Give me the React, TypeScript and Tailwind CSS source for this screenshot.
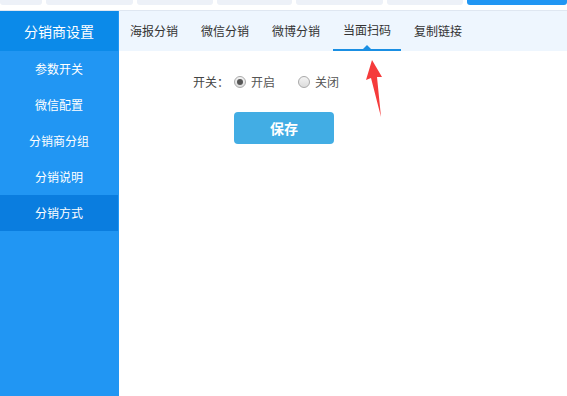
const font = { fontFamily: '"Noto Sans CJK SC", "Noto Sans", sans-serif' };

const topPieces = [
  "w-[42px]",
  "w-[87px]",
  "w-[76px]",
  "w-[75px]",
  "w-[87px]",
  "w-[76px]",
];

const menu = ["参数开关", "微信配置", "分销商分组", "分销说明", "分销方式"];
const tabs = ["海报分销", "微信分销", "微博分销", "当面扫码", "复制链接"];

function Radio({ checked, label }: { checked?: boolean; label: string }) {
  return (
    <label className="flex items-center gap-[5px]">
      <span className="w-[12px] h-[12px] rounded-full border border-[#a9a9a9] bg-gradient-to-b from-[#f4f4f4] to-[#dcdcdc] flex items-center justify-center">
        {checked && <span className="w-[6px] h-[6px] rounded-full bg-[#555]" />}
      </span>
      <span className="text-[#555]">{label}</span>
    </label>
  );
}

export default function App() {
  return (
    <div className="h-screen bg-white text-[12px] text-[#333] relative overflow-hidden" style={font}>
      <div className="h-[11px] border-b border-[#dfe7f1] flex gap-[4px]">
        {topPieces.map((w, i) => (
          <div key={i} className={`${w} h-[5px] rounded-b-[3px] bg-[#edf1f8]`} />
        ))}
        <div className="w-[100px] h-[5px] rounded-b-[3px] bg-[#2196f3]" />
      </div>

      <div className="flex h-[385px]">
        <div className="w-[119px] bg-[#2196f3] text-white">
          <div className="w-[118px] h-[40px] bg-[#0b8ae9] flex items-center justify-center text-[14px]">
            分销商设置
          </div>
          {menu.map((m, i) => (
            <div
              key={m}
              className={`w-[118px] h-[36px] flex items-center justify-center ${i === 4 ? "bg-[#0a7ddf]" : ""}`}
            >
              {m}
            </div>
          ))}
        </div>

        <div className="flex-1">
          <div className="h-[40px] bg-[#eef6fe] flex pl-px gap-[3px]">
            {tabs.map((t, i) => (
              <div
                key={t}
                className={`relative w-[68px] flex items-center justify-center ${i === 3 ? "border-b-2 border-[#1a8fe3]" : ""}`}
              >
                {t}
                {i === 3 && (
                  <span className="absolute bottom-0 left-1/2 -translate-x-1/2 w-0 h-0 border-x-[4px] border-x-transparent border-b-[4px] border-b-[#1a8fe3]" />
                )}
              </div>
            ))}
          </div>

          <div className="pl-[74px] pt-[22px]">
            <div className="flex items-center h-[18px]">
              <span className="text-[#444]">开关：</span>
              <div className="flex items-center gap-[23px] ml-[5px]">
                <Radio checked label="开启" />
                <Radio label="关闭" />
              </div>
            </div>
            <button className="mt-[21px] ml-[41px] w-[100px] h-[32px] rounded-[4px] bg-[#42ade4] text-white text-[14px] font-bold">
              保存
            </button>
          </div>
        </div>
      </div>

      <svg className="absolute left-0 top-0 pointer-events-none" width="567" height="396">
        <polygon points="372,60 382,77 377,77 381,117 371,78 366,80" fill="#f53b3b" />
      </svg>
    </div>
  );
}
